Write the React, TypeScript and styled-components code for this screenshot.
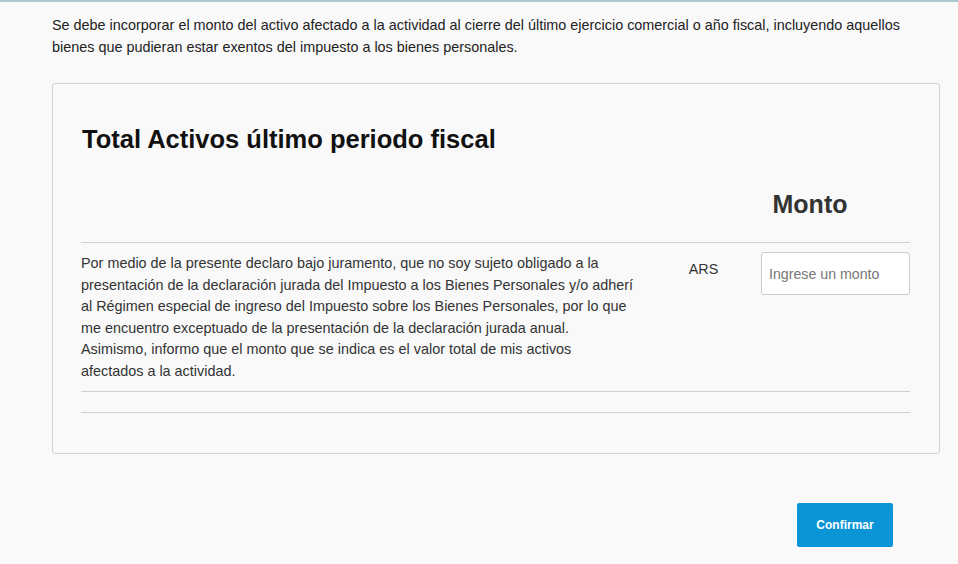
import styled, { createGlobalStyle } from 'styled-components';

const GlobalStyle = createGlobalStyle`
  html, body {
    margin: 0;
    padding: 0;
    background: #f9f9f9;
  }
  body {
    font-family: 'Liberation Sans', Arial, sans-serif;
  }
`;

const Page = styled.div`
  min-height: 564px;
  box-sizing: border-box;
  border-top: 2px solid #aac8d0;
  padding: 12px 18px 0 52px;
  background: #f9f9f9;
`;

const Intro = styled.p`
  margin: 0 0 25px;
  font-size: 14.4px;
  line-height: 22px;
  color: #222;
  max-width: 860px;
`;

const Card = styled.section`
  border: 1px solid #cfcfcf;
  border-radius: 3px;
  padding: 40px 29px 40px 28px;
`;

const Title = styled.h2`
  margin: 0 0 0 1px;
  font-size: 25.5px;
  line-height: 30px;
  font-weight: bold;
  color: #111;
`;

const HeaderRow = styled.div`
  display: flex;
  justify-content: flex-end;
  padding: 36px 0 24px;
  border-bottom: 1px solid #cfcfcf;
`;

const ColumnTitle = styled.h3`
  margin: 0;
  width: 200px;
  text-align: center;
  font-size: 25px;
  line-height: 28px;
  font-weight: bold;
  color: #333;
`;

const Row = styled.div`
  display: grid;
  grid-template-columns: 580px 1fr 149px;
  border-bottom: 1px solid #cfcfcf;
`;

const Declaration = styled.p`
  margin: 0;
  padding: 10px 0 8px;
  font-size: 14.4px;
  line-height: 21.6px;
  color: #333;
  white-space: nowrap;
`;

const Currency = styled.div`
  padding: 18px 15px 0 0;
  text-align: center;
  font-size: 14.4px;
  line-height: 16px;
  color: #333;
`;

const AmountCell = styled.div`
  padding-top: 9px;
`;

const AmountInput = styled.input`
  box-sizing: border-box;
  width: 149px;
  height: 43px;
  padding: 0 7px;
  border: 1px solid #cccccc;
  border-radius: 3px;
  background: #fff;
  font-family: 'Liberation Sans', Arial, sans-serif;
  font-size: 14.2px;
  color: #333;

  &::placeholder {
    color: #777;
  }
`;

const EmptyRow = styled.div`
  height: 20px;
  border-bottom: 1px solid #cfcfcf;
`;

const Actions = styled.div`
  display: flex;
  justify-content: flex-end;
  padding: 49px 47px 0 0;
`;

const ConfirmButton = styled.button`
  width: 96px;
  height: 44px;
  border: none;
  border-radius: 2px;
  background: #0b95d6;
  color: #fff;
  font-family: 'Liberation Sans', Arial, sans-serif;
  font-size: 12px;
  font-weight: bold;
  cursor: pointer;
`;

export default function App() {
  return (
    <>
      <GlobalStyle />
      <Page>
        <Intro>
          Se debe incorporar el monto del activo afectado a la actividad al cierre del último
          ejercicio comercial o año fiscal, incluyendo aquellos bienes que pudieran estar exentos
          del impuesto a los bienes personales.
        </Intro>
        <Card>
          <Title>Total Activos último periodo fiscal</Title>
          <HeaderRow>
            <ColumnTitle>Monto</ColumnTitle>
          </HeaderRow>
          <Row>
            <Declaration>
              Por medio de la presente declaro bajo juramento, que no soy sujeto obligado a la
              <br />
              presentación de la declaración jurada del Impuesto a los Bienes Personales y/o adherí
              <br />
              al Régimen especial de ingreso del Impuesto sobre los Bienes Personales, por lo que
              <br />
              me encuentro exceptuado de la presentación de la declaración jurada anual.
              <br />
              Asimismo, informo que el monto que se indica es el valor total de mis activos
              <br />
              afectados a la actividad.
            </Declaration>
            <Currency>ARS</Currency>
            <AmountCell>
              <AmountInput placeholder="Ingrese un monto" />
            </AmountCell>
          </Row>
          <EmptyRow />
        </Card>
        <Actions>
          <ConfirmButton>Confirmar</ConfirmButton>
        </Actions>
      </Page>
    </>
  );
}
